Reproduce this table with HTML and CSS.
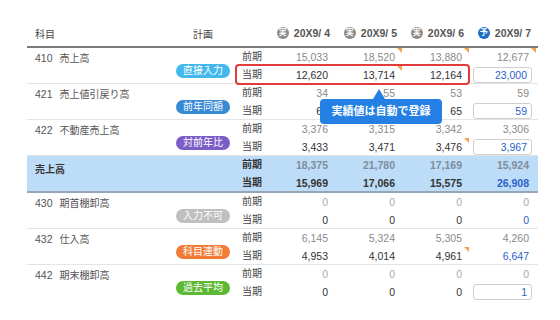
FILE: index.html
```html
<!DOCTYPE html>
<html lang="ja">
<head>
  <meta charset="UTF-8" />
  <title>計画入力</title>
  <link rel="stylesheet" href="styles.css">
</head>
<body>
  <div class="sheet">
    <div class="head">
      <div class="h-acct"><span>科目</span><span>計画</span></div>
      <div></div>
      <div class="h-month"><span class="ico">実</span>20X9/ 4</div>
      <div class="h-month"><span class="ico">実</span>20X9/ 5</div>
      <div class="h-month"><span class="ico">実</span>20X9/ 6</div>
      <div class="h-month"><span class="ico plan">予</span>20X9/ 7</div>
    </div>

    <div class="row">
      <div class="acct"><div class="name"><span class="code">410</span>売上高</div><span class="tag t-direct">直接入力</span></div>
      <div class="lbl">前期</div>
      <div class="v prev">15,033</div>
      <div class="v prev mk">18,520</div>
      <div class="v prev mk">13,880</div>
      <div class="v prev mk">12,677</div>
      <div class="lbl">当期</div>
      <div class="v">12,620</div>
      <div class="v mk">13,714</div>
      <div class="v">12,164</div>
      <div class="v"><span class="inp">23,000</span></div>
    </div>

    <div class="row">
      <div class="acct"><div class="name"><span class="code">421</span>売上値引戻り高</div><span class="tag t-same">前年同額</span></div>
      <div class="lbl">前期</div>
      <div class="v prev">34</div>
      <div class="v prev">55</div>
      <div class="v prev">53</div>
      <div class="v prev">59</div>
      <div class="lbl">当期</div>
      <div class="v">61</div>
      <div class="v"></div>
      <div class="v">65</div>
      <div class="v"><span class="inp">59</span></div>
    </div>

    <div class="row">
      <div class="acct"><div class="name"><span class="code">422</span>不動産売上高</div><span class="tag t-ratio">対前年比</span></div>
      <div class="lbl">前期</div>
      <div class="v prev">3,376</div>
      <div class="v prev">3,315</div>
      <div class="v prev">3,342</div>
      <div class="v prev">3,306</div>
      <div class="lbl">当期</div>
      <div class="v">3,433</div>
      <div class="v">3,471</div>
      <div class="v mk">3,476</div>
      <div class="v"><span class="inp">3,967</span></div>
    </div>

    <div class="row total">
      <div class="acct"><div class="name">売上高</div></div>
      <div class="lbl">前期</div>
      <div class="v prev">18,375</div>
      <div class="v prev">21,780</div>
      <div class="v prev">17,169</div>
      <div class="v prev">15,924</div>
      <div class="lbl">当期</div>
      <div class="v">15,969</div>
      <div class="v">17,066</div>
      <div class="v">15,575</div>
      <div class="v plan">26,908</div>
    </div>

    <div class="row">
      <div class="acct"><div class="name"><span class="code">430</span>期首棚卸高</div><span class="tag t-off">入力不可</span></div>
      <div class="lbl">前期</div>
      <div class="v prev light">0</div>
      <div class="v prev light">0</div>
      <div class="v prev light">0</div>
      <div class="v prev light">0</div>
      <div class="lbl">当期</div>
      <div class="v">0</div>
      <div class="v">0</div>
      <div class="v">0</div>
      <div class="v plan">0</div>
    </div>

    <div class="row">
      <div class="acct"><div class="name"><span class="code">432</span>仕入高</div><span class="tag t-link">科目連動</span></div>
      <div class="lbl">前期</div>
      <div class="v prev">6,145</div>
      <div class="v prev">5,324</div>
      <div class="v prev">5,305</div>
      <div class="v prev">4,260</div>
      <div class="lbl">当期</div>
      <div class="v">4,953</div>
      <div class="v">4,014</div>
      <div class="v mk">4,961</div>
      <div class="v plan">6,647</div>
    </div>

    <div class="row last">
      <div class="acct"><div class="name"><span class="code">442</span>期末棚卸高</div><span class="tag t-avg">過去平均</span></div>
      <div class="lbl">前期</div>
      <div class="v prev light">0</div>
      <div class="v prev light">0</div>
      <div class="v prev light">0</div>
      <div class="v prev light">0</div>
      <div class="lbl">当期</div>
      <div class="v">0</div>
      <div class="v">0</div>
      <div class="v">0</div>
      <div class="v"><span class="inp">1</span></div>
    </div>

    <div class="focus"></div>
    <div class="tip">実績値は自動で登録</div>
  </div>
</body>
</html>
```

FILE: styles.css
```css
body {
  margin: 0;
  padding: 20px 0 0 27px;
  background: #fff;
  color: #333;
  font-family: "Liberation Sans", "Noto Sans CJK JP", sans-serif;
  font-size: 10.5px;
}

.sheet {
  position: relative;
  width: 511px;
}

.head {
  display: grid;
  grid-template-columns: 209px 32px repeat(4, 67px);
  height: 26px;
  align-items: center;
  border-bottom: 2px solid #7b7b7b;
}

.h-acct {
  display: flex;
  justify-content: space-between;
  padding: 0 23px 0 8px;
  font-size: 10px;
  color: #444;
}

.h-month {
  display: flex;
  justify-content: flex-end;
  align-items: center;
  gap: 5px;
  padding-right: 5px;
  font-weight: bold;
  color: #555;
}

.ico {
  width: 12px;
  height: 12px;
  border-radius: 50%;
  background: #8d8d8d;
  color: #fff;
  font-size: 8px;
  line-height: 12px;
  text-align: center;
  font-weight: bold;
}

.ico.plan {
  background: #1f6fc5;
}

.row {
  display: grid;
  grid-template-columns: 209px 32px repeat(4, 67px);
  grid-template-rows: 18px 17px;
  border-bottom: 1px solid #e4e4e4;
}

.row.last {
  border-bottom: none;
}

.acct {
  grid-row: span 2;
  display: grid;
  grid-template-rows: 18px 17px;
}

.name {
  padding-left: 8px;
  line-height: 20px;
  font-size: 10px;
  color: #555;
}

.code {
  display: inline-block;
  margin-right: 7px;
  font-size: 10.5px;
}

.tag {
  justify-self: end;
  align-self: start;
  margin: -2px 6px 0 0;
  height: 14px;
  line-height: 14px;
  padding: 0 7px;
  border-radius: 7px;
  color: #fff;
  font-size: 10px;
}

.t-direct { background: #43b8ea; }
.t-same { background: #388ad6; }
.t-ratio { background: #7c5dc7; }
.t-off { background: #bfbfbf; }
.t-link { background: #f27b35; }
.t-avg { background: #5db833; }

.lbl {
  padding-left: 6px;
  font-size: 10px;
  line-height: 18px;
  color: #444;
}

.v {
  position: relative;
  text-align: right;
  padding-right: 7px;
  line-height: 18px;
}

.v.prev {
  color: #8a8a8a;
}

.v.prev.light {
  color: #aaa;
}

.v.plan {
  color: #2b63c6;
}

.mk::after {
  content: '';
  position: absolute;
  top: 0;
  right: 0;
  border-top: 5px solid #f5a04a;
  border-left: 5px solid transparent;
}

.inp {
  display: block;
  box-sizing: border-box;
  height: 16px;
  margin: 1px -3px 0 4px;
  padding-right: 4px;
  line-height: 14px;
  border: 1px solid #cfcfcf;
  border-radius: 3px;
  color: #2b63c6;
}

.total {
  background: #bddcf7;
  border-bottom: 2px solid #97a6b6;
}

.total .name {
  line-height: 28px;
  color: #333;
  font-weight: bold;
}

.total .lbl {
  font-weight: bold;
  color: #333;
}

.total .v {
  font-weight: bold;
}

.total .v.prev {
  color: #7f8d9c;
}

.focus {
  position: absolute;
  left: 208px;
  top: 44px;
  width: 235px;
  height: 21px;
  box-sizing: border-box;
  border: 2px solid #e23b3b;
  border-radius: 4px;
}

.tip {
  position: absolute;
  left: 293px;
  top: 79px;
  width: 122px;
  height: 25px;
  line-height: 25px;
  text-align: center;
  background: #2480e3;
  color: #fff;
  font-weight: bold;
  font-size: 11px;
  border-radius: 4px;
}

.tip::before {
  content: '';
  position: absolute;
  left: 53px;
  top: -10px;
  border-left: 6px solid transparent;
  border-right: 6px solid transparent;
  border-bottom: 10px solid #2480e3;
}
```
